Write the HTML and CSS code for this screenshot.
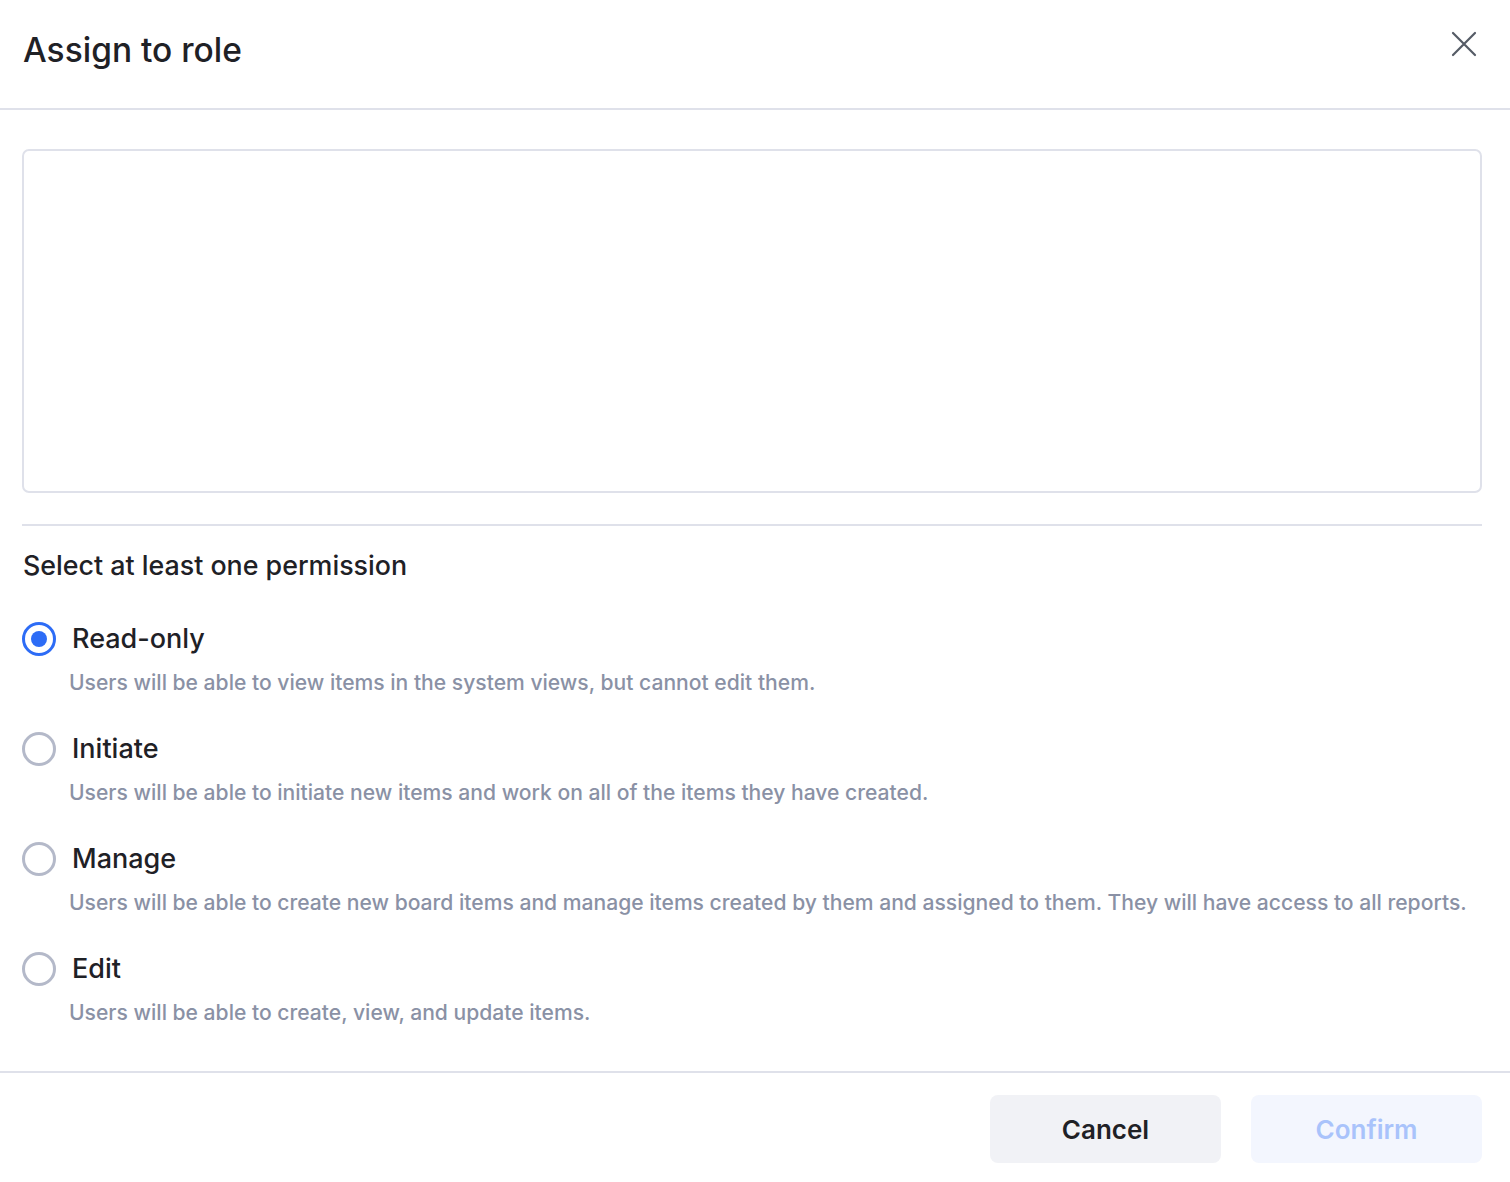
FILE: index.html
```html
<!DOCTYPE html>
<html lang="en">
<head>
  <meta charset="UTF-8">
  <title>Assign to role</title>
  <link rel="stylesheet" href="styles.css">
</head>
<body>
  <div class="modal">
    <div class="modal-header">
      <h1>Assign to role</h1>
      <button class="close" aria-label="Close">
        <svg width="26" height="26" viewBox="0 0 26 26"><path d="M2 2L24 24M24 2L2 24" stroke="#555b66" stroke-width="2.2" stroke-linecap="round" fill="none"/></svg>
      </button>
    </div>

    <div class="modal-body">
      <div class="picker"></div>
      <div class="divider"></div>

      <h3>Select at least one permission</h3>

      <div class="options">
        <label class="option">
          <span class="radio checked"></span>
          <span class="option-title">Read-only</span>
          <span class="option-desc">Users will be able to view items in the system views, but cannot edit them.</span>
        </label>
        <label class="option">
          <span class="radio"></span>
          <span class="option-title">Initiate</span>
          <span class="option-desc">Users will be able to initiate new items and work on all of the items they have created.</span>
        </label>
        <label class="option">
          <span class="radio"></span>
          <span class="option-title">Manage</span>
          <span class="option-desc">Users will be able to create new board items and manage items created by them and assigned to them. They will have access to all reports.</span>
        </label>
        <label class="option">
          <span class="radio"></span>
          <span class="option-title">Edit</span>
          <span class="option-desc">Users will be able to create, view, and update items.</span>
        </label>
      </div>
    </div>

    <div class="modal-footer">
      <button class="btn btn-cancel">Cancel</button>
      <button class="btn btn-confirm" disabled>Confirm</button>
    </div>
  </div>
</body>
</html>
```

FILE: styles.css
```css
:root { --line: #dfe1ea; --text: #1f2126; --muted: #8a91a5; --blue: #2d6cf6; }
body { margin: 0; font-family: Inter, "Noto Sans", sans-serif; color: var(--text); background: #fff; }
.modal { width: 1510px; height: 1182px; display: flex; flex-direction: column; box-sizing: border-box; }

.modal-header { height: 108px; border-bottom: 2px solid var(--line); display: flex; justify-content: space-between; align-items: flex-start; padding: 0 33px 0 23px; box-sizing: content-box; }
.modal-header h1 { margin: 0; padding-top: 28px; font-size: 33.5px; font-weight: 500; line-height: 44px; }
.close { border: 0; background: none; padding: 0; margin-top: 31px; cursor: pointer; }

.modal-body { flex: 1; padding: 39px 28px 0 22px; }
.picker { height: 340px; border: 2px solid var(--line); border-radius: 7px; }
.divider { height: 2px; background: var(--line); margin-top: 31px; }
h3 { margin: 20px 0 0 1px; font-size: 26.8px; font-weight: 500; line-height: 38px; }

.options { margin-top: 37px; display: flex; flex-direction: column; gap: 33px; }
.option { display: grid; grid-template-columns: 34px 1fr; column-gap: 16px; row-gap: 11px; align-items: center; cursor: pointer; }
.radio { width: 34px; height: 34px; border-radius: 50%; border: 3px solid #b4b9c9; box-sizing: border-box; position: relative; }
.radio.checked { border-color: var(--blue); }
.radio.checked::after { content: ""; position: absolute; left: 6px; top: 6px; width: 16px; height: 16px; border-radius: 50%; background: var(--blue); }
.option-title { font-size: 27px; font-weight: 500; line-height: 36px; }
.option-desc { grid-column: 2; margin-left: -3px; font-size: 21.1px; font-weight: 500; color: var(--muted); line-height: 30px; white-space: nowrap; }

.modal-footer { height: 111px; border-top: 2px solid var(--line); display: flex; justify-content: flex-end; gap: 30px; padding: 22px 28px 0 0; box-sizing: border-box; }
.btn { width: 231px; height: 68px; border: 0; border-radius: 8px; font-family: inherit; font-size: 26px; font-weight: 600; }
.btn-cancel { background: #f1f2f6; color: #1f2126; }
.btn-confirm { background: #f3f6fe; color: #a9c3fb; }
```
